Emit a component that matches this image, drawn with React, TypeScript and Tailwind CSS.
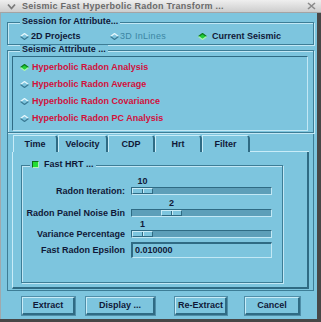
import React from 'react';

function Diamond({ on }: { on?: boolean }) {
  return (
    <svg width="9" height="7" viewBox="0 0 9 7" className="shrink-0">
      <polygon points="4.5,0.5 8.5,3.5 4.5,6.5 0.5,3.5" fill={on ? '#22cc38' : '#7dc5de'} />
      <polyline points="0.5,3.5 4.5,0.5 8.5,3.5" fill="none" stroke={on ? '#0c7a1c' : '#e8f8fd'} strokeWidth="1.2" />
      <polyline points="0.5,3.5 4.5,6.5 8.5,3.5" fill="none" stroke={on ? '#a8f4b2' : '#3a7a94'} strokeWidth="1.2" />
    </svg>
  );
}

function SliderRow({ label, value, offset, mt }: { label: string; value: string; offset: number; mt: string }) {
  return (
    <div className={`flex ${mt}`}>
      <div className="w-[103px] flex flex-col">
        <div className="h-[11px]" />
        <div className="h-[8px] flex items-center justify-end whitespace-nowrap">{label}</div>
      </div>
      <div className="ml-[6px] w-[141px] flex flex-col">
        <div className="h-[10px] flex">
          <div style={{ width: offset }} />
          <div className="w-[21px] flex items-center justify-center">{value}</div>
        </div>
        <div className="mt-[1px] h-[8px] bg-[#5d9fb9] border-t border-l border-[#2f6b84] border-b border-r border-b-[#c2e8f5] border-r-[#c2e8f5] flex">
          <div style={{ width: offset - 1 }} />
          <div className="w-[21px] h-full bg-[#7dc5de] border-t border-l border-[#c8ecf8] border-b border-r border-b-[#2f6b84] border-r-[#2f6b84] flex justify-center">
            <div className="w-[1px] h-full bg-[#2f6b84]" />
            <div className="w-[1px] h-full bg-[#c8ecf8]" />
          </div>
        </div>
      </div>
    </div>
  );
}

function Btn({ label, w, ml }: { label: string; w: string; ml: string }) {
  return (
    <div className={`${w} ${ml} h-[18px] flex items-center justify-center bg-[#7dc5de] border-t border-l border-[#c8ecf8] border-b-2 border-r-2 border-b-[#2f6b84] border-r-[#2f6b84] shadow-[0_0_0_1px_#4f8ea8]`}>
      {label}
    </div>
  );
}

function Tab({ label, w }: { label: string; w: string }) {
  return (
    <div className={`${w} h-[17px] flex items-center justify-center border-t border-l border-[#c8ecf8] border-r-2 border-r-[#2f6b84] rounded-tr-[4px]`}>
      {label}
    </div>
  );
}

export default function App() {
  const etched = 'border border-[#3d7d96] shadow-[inset_1px_1px_0_#c2e8f5,1px_1px_0_#c2e8f5]';
  return (
    <div className="w-[321px] h-[322px] bg-[#474747] overflow-hidden font-['Liberation_Sans',Arial,sans-serif] text-[9px] font-bold text-[#101838] leading-[9px]">
      {/* title bar */}
      <div className="h-[13px] flex items-center bg-gradient-to-b from-[#efefef] to-[#cdcdcd] border-b border-[#a4a4a4] text-[#6a6a6a]">
        <div className="w-[22px] flex justify-center">
          <svg width="9" height="7" viewBox="0 0 9 7">
            <polyline points="1,1.5 4.5,5.5 8,1.5" fill="none" stroke="#7a7a7a" strokeWidth="1.8" />
          </svg>
        </div>
        <span className="tracking-[0.25px] whitespace-nowrap">Seismic Fast Hyperbolic Radon Transform ...</span>
        <div className="ml-auto mr-[5px]">
          <svg width="9" height="8" viewBox="0 0 9 8">
            <path d="M1,1 L8,7 M8,1 L1,7" stroke="#8a8a8a" strokeWidth="1.6" />
          </svg>
        </div>
      </div>

      {/* body */}
      <div className="w-[317px] h-[306px] bg-[#7dc5de] border-l border-[#a0a8ac] pl-[6px] pt-[9px]">
        {/* Session frame */}
        <div className={`relative w-[307px] h-[23px] ${etched}`}>
          <div className="absolute top-[-6px] left-[12px] px-[2px] bg-[#7dc5de] whitespace-nowrap">Session for Attribute...</div>
          <div className="flex items-center h-full pt-[6px] pl-[12px]">
            <div className="w-[90px] flex items-center gap-[2px]">
              <Diamond />
              <span>2D Projects</span>
            </div>
            <div className="w-[88px] flex items-center gap-[1px]">
              <Diamond />
              <span className="font-normal text-[#3c86a4] tracking-[0.3px]">3D InLines</span>
            </div>
            <div className="flex items-center gap-[5px]">
              <Diamond on />
              <span>Current Seismic</span>
            </div>
          </div>
        </div>

        {/* Seismic Attribute frame */}
        <div className={`relative mt-[5px] w-[307px] h-[83px] ${etched}`}>
          <div className="absolute top-[-6px] left-[12px] px-[2px] bg-[#7dc5de] whitespace-nowrap">Seismic Attribute ...</div>
          <div className="ml-[4px] mt-[5px] w-[296px] h-[75px] border-t border-l border-[#2f6b84] border-b border-r border-b-[#c2e8f5] border-r-[#c2e8f5] pt-[2px] text-[#d2103c]">
            {['Hyperbolic Radon Analysis', 'Hyperbolic Radon Average', 'Hyperbolic Radon Covariance', 'Hyperbolic Radon PC Analysis'].map((t, i) => (
              <div key={t} className="h-[17px] flex items-center pl-[7px] gap-[3px]">
                <Diamond on={i === 0} />
                <span className="whitespace-nowrap">{t}</span>
              </div>
            ))}
          </div>
        </div>

        {/* Lower area */}
        <div className="w-[307px] h-[158px] border-l border-r border-b border-[#3d7d96] pl-[4px] pt-[2px]">
          <div className="flex ml-[1px] w-[296px]">
            <Tab label="Time" w="w-[45px]" />
            <Tab label="Velocity" w="w-[50px]" />
            <Tab label="CDP" w="w-[47px]" />
            <Tab label="Hrt" w="w-[47px]" />
            <Tab label="Filter" w="w-[48px]" />
            <div className="flex-1 h-[17px] border-b border-[#c8ecf8]" />
          </div>
          <div className="w-[297px] h-[137px] border-l border-[#c8ecf8] border-r-2 border-b-2 border-r-[#2f6b84] border-b-[#2f6b84] pl-[8px] pt-[13px]">
            <div className={`relative w-[262px] h-[118px] ${etched} pt-[10px]`}>
              <div className="absolute top-[-6px] left-[8px] px-[2px] bg-[#7dc5de] flex items-center gap-[5px] whitespace-nowrap">
                <div className="w-[7px] h-[7px] bg-[#22dd33] border-t border-l border-[#0e6b1a] border-b border-r border-b-[#b0f0b8] border-r-[#b0f0b8]" />
                <span>Fast HRT ...</span>
              </div>
              <SliderRow label="Radon Iteration:" value="10" offset={1} mt="" />
              <SliderRow label="Radon Panel Noise Bin" value="2" offset={30} mt="mt-[3px]" />
              <SliderRow label="Variance Percentage" value="1" offset={1} mt="mt-[2px]" />
              <div className="flex mt-[4px]">
                <div className="w-[103px] h-[16px] flex items-center justify-end whitespace-nowrap">Fast Radon Epsilon</div>
                <div className="ml-[6px] w-[141px] h-[16px] flex items-center pl-[2px] border-t-2 border-l-2 border-[#2f6b84] border-b border-r border-b-[#c2e8f5] border-r-[#c2e8f5]">
                  0.010000
                </div>
              </div>
            </div>
          </div>
        </div>

        {/* Buttons */}
        <div className="flex mt-[6px]">
          <Btn label="Extract" w="w-[53px]" ml="ml-[15px]" />
          <Btn label="Display ..." w="w-[69px]" ml="ml-[11px]" />
          <Btn label="Re-Extract" w="w-[52px]" ml="ml-[20px]" />
          <Btn label="Cancel" w="w-[55px]" ml="ml-[18px]" />
        </div>
      </div>
    </div>
  );
}
